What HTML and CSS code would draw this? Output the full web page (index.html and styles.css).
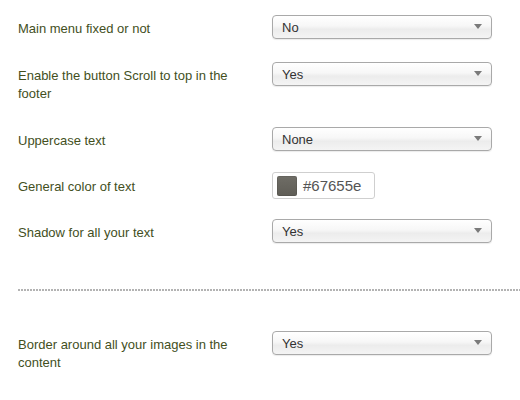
FILE: index.html
```html
<!DOCTYPE html>
<html>
<head>
<meta charset="utf-8">
<link rel="stylesheet" href="styles.css">
</head>
<body>
<div class="options">
  <div class="row">
    <div class="label">Main menu fixed or not</div>
    <div class="select"><span>No</span><svg class="arrow" width="8" height="5" viewBox="0 0 8 5"><polygon points="0,0 8,0 4,5" /></svg></div>
  </div>
  <div class="row">
    <div class="label">Enable the button Scroll to top in the footer</div>
    <div class="select"><span>Yes</span><svg class="arrow" width="8" height="5" viewBox="0 0 8 5"><polygon points="0,0 8,0 4,5" /></svg></div>
  </div>
  <div class="row">
    <div class="label">Uppercase text</div>
    <div class="select"><span>None</span><svg class="arrow" width="8" height="5" viewBox="0 0 8 5"><polygon points="0,0 8,0 4,5" /></svg></div>
  </div>
  <div class="row row-color">
    <div class="label">General color of text</div>
    <div class="color"><span class="swatch"></span><span class="hex">#67655e</span></div>
  </div>
  <div class="row">
    <div class="label">Shadow for all your text</div>
    <div class="select"><span>Yes</span><svg class="arrow" width="8" height="5" viewBox="0 0 8 5"><polygon points="0,0 8,0 4,5" /></svg></div>
  </div>
  <div class="separator"></div>
  <div class="row">
    <div class="label">Border around all your images in the content</div>
    <div class="select"><span>Yes</span><svg class="arrow" width="8" height="5" viewBox="0 0 8 5"><polygon points="0,0 8,0 4,5" /></svg></div>
  </div>
</div>
</body>
</html>
```

FILE: styles.css
```css
html, body {
  margin: 0;
  padding: 0;
  background: #ffffff;
}

body {
  font-family: "Liberation Sans", Arial, sans-serif;
  font-size: 13px;
}

.options {
  padding: 15px 0 0 18px;
}

.row {
  display: flex;
  align-items: flex-start;
  margin-bottom: 20px;
}

.label {
  width: 254px;
  box-sizing: border-box;
  padding: 5px 10px 4px 0;
  line-height: 18px;
  color: #434f1d;
}

.select {
  width: 220px;
  height: 24px;
  box-sizing: border-box;
  border: 1px solid #a9a9a9;
  border-radius: 4px;
  background: linear-gradient(#ffffff 0%, #f7f7f7 45%, #ececec 60%, #f4f4f4 100%);
  box-shadow: 0 1px 1px rgba(0, 0, 0, 0.08);
  display: flex;
  align-items: center;
  justify-content: space-between;
  padding: 0 9px 0 9px;
  color: #333333;
  font-size: 13px;
}

.arrow {
  fill: #7a7a7a;
  margin-top: -1px;
}

.row-color {
  align-items: center;
}

.row-color .label {
  padding: 0 10px 0 0;
}

.color {
  width: 103px;
  height: 27px;
  box-sizing: border-box;
  border: 1px solid #cfcfcf;
  border-radius: 3px;
  background: #ffffff;
  display: flex;
  align-items: center;
  padding-left: 4px;
  gap: 6px;
  margin-top: -2px;
}

.swatch {
  width: 20px;
  height: 20px;
  border-radius: 2px;
  background: linear-gradient(#6f6d66 0%, #67655e 50%, #5f5d56 100%);
  box-shadow: inset 0 0 0 1px rgba(0, 0, 0, 0.08);
}

.hex {
  font-size: 15px;
  color: #555555;
}

.separator {
  height: 2px;
  margin: 43px 0 40px 0;
  background-image: linear-gradient(to right, #b3b3b3 0, #b3b3b3 2px, transparent 2px, transparent 3px);
  background-size: 3px 2px;
  background-repeat: repeat-x;
}
```
